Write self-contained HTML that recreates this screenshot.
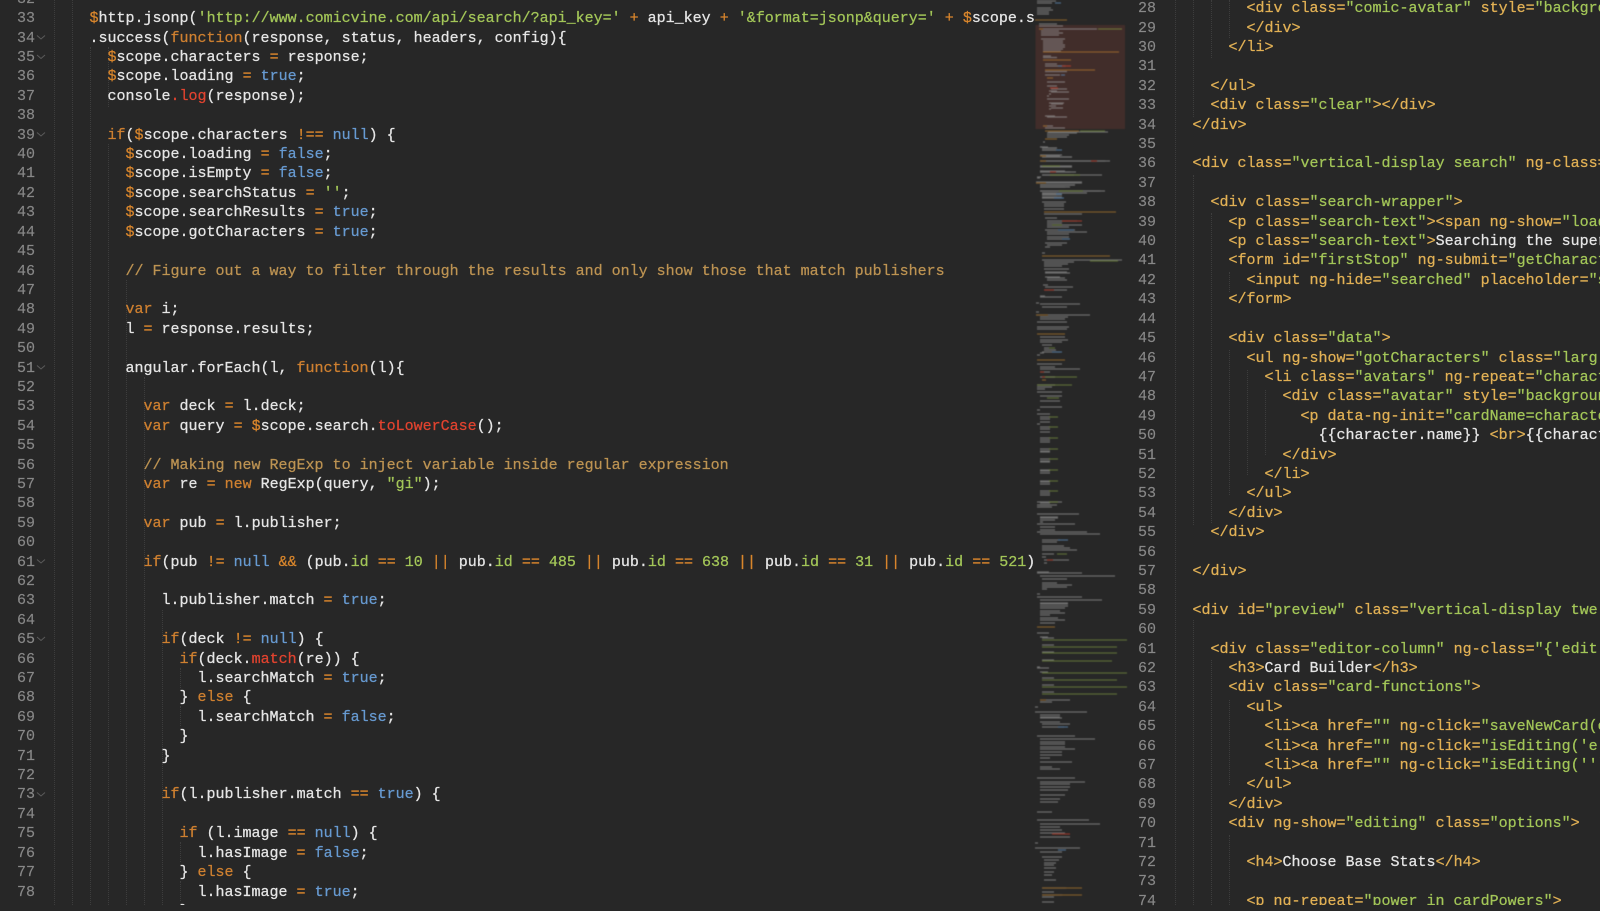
<!DOCTYPE html>
<html><head><meta charset="utf-8"><title>Editor</title>
<style>
html,body{margin:0;padding:0;background:#272727;width:1600px;height:905px;overflow:hidden}
.abs{position:absolute}
pre{margin:0;font:15px/19.4px "Liberation Mono","DejaVu Sans Mono",monospace;color:#e6e6e6;-webkit-text-stroke:.25px currentColor;white-space:pre}
.n{color:#888;text-align:right;-webkit-text-stroke:.15px #888}
.pane{position:absolute;top:0;height:905px;overflow:hidden}
i{font-style:normal}
.k{color:#cf8030}.o{color:#d9862c}.s{color:#a3c658}.b{color:#679ad1}.r{color:#e2432f}.c{color:#bd9352}
.t{color:#e2b155}
.g{position:absolute;width:0;border-left:1px dotted #3d3d3d}
</style></head><body>

<pre class="n abs" style="left:0;width:35px;top:-10.2px">32
33
34
35
36
37
38
39
40
41
42
43
44
45
46
47
48
49
50
51
52
53
54
55
56
57
58
59
60
61
62
63
64
65
66
67
68
69
70
71
72
73
74
75
76
77
78</pre>

<svg class="abs" style="left:0;top:0" width="60" height="905" fill="none" stroke="#5a5a5a" stroke-width="1"><path d="M37 35.500l4 3.500 4-3.500M37 55l4 3.500 4-3.500M37 132.500l4 3.500 4-3.500M37 365.500l4 3.500 4-3.500M37 559.500l4 3.500 4-3.500M37 637l4 3.500 4-3.500M37 792.500l4 3.500 4-3.500"/></svg>

<div class="pane" style="left:0;width:1034px">
<div class="g" style="left:54px;top:0;height:905px"></div>
<div class="g" style="left:72px;top:0;height:905px"></div>
<div class="g" style="left:90px;top:47px;height:858px"></div>
<div class="g" style="left:108px;top:47px;height:60px"></div>
<div class="g" style="left:108px;top:144px;height:761px"></div>
<div class="g" style="left:126px;top:280px;height:625px"></div>
<div class="g" style="left:144px;top:377px;height:528px"></div>
<div class="g" style="left:162px;top:610px;height:295px"></div>
<div class="g" style="left:162px;top:800px;height:105px"></div>
<div class="g" style="left:180px;top:668px;height:20px"></div>
<div class="g" style="left:180px;top:706px;height:20px"></div>
<div class="g" style="left:180px;top:842px;height:20px"></div>
<div class="g" style="left:180px;top:881px;height:20px"></div>
<pre class="abs" style="left:35.500px;top:-10.2px">

      <i class="o">$</i>http.jsonp(<i class="s">'http://www.comicvine.com/api/search/?api_key='</i> <i class="o">+</i> api_key <i class="o">+</i> <i class="s">'&amp;format=jsonp&amp;query='</i> <i class="o">+</i> <i class="o">$</i>scope.search
      .success(<i class="k">function</i>(response, status, headers, config){
        <i class="o">$</i>scope.characters <i class="o">=</i> response;
        <i class="o">$</i>scope.loading <i class="o">=</i> <i class="b">true</i>;
        console<i class="r">.log</i>(response);

        <i class="k">if</i>(<i class="o">$</i>scope.characters <i class="o">!==</i> <i class="b">null</i>) {
          <i class="o">$</i>scope.loading <i class="o">=</i> <i class="b">false</i>;
          <i class="o">$</i>scope.isEmpty <i class="o">=</i> <i class="b">false</i>;
          <i class="o">$</i>scope.searchStatus <i class="o">=</i> <i class="s">''</i>;
          <i class="o">$</i>scope.searchResults <i class="o">=</i> <i class="b">true</i>;
          <i class="o">$</i>scope.gotCharacters <i class="o">=</i> <i class="b">true</i>;

          <i class="c">// Figure out a way to filter through the results and only show those that match publishers</i>

          <i class="k">var</i> i;
          l <i class="o">=</i> response.results;

          angular.forEach(l, <i class="k">function</i>(l){

            <i class="k">var</i> deck <i class="o">=</i> l.deck;
            <i class="k">var</i> query <i class="o">=</i> <i class="o">$</i>scope.search.<i class="r">toLowerCase</i>();

            <i class="c">// Making new RegExp to inject variable inside regular expression</i>
            <i class="k">var</i> re <i class="o">=</i> <i class="k">new</i> RegExp(query, <i class="s">"gi"</i>);

            <i class="k">var</i> pub <i class="o">=</i> l.publisher;

            <i class="k">if</i>(pub <i class="o">!=</i> <i class="b">null</i> <i class="o">&amp;&amp;</i> (pub.<i class="s">id</i> <i class="o">==</i> <i class="s">10</i> <i class="o">||</i> pub.<i class="s">id</i> <i class="o">==</i> <i class="s">485</i> <i class="o">||</i> pub.<i class="s">id</i> <i class="o">==</i> <i class="s">638</i> <i class="o">||</i> pub.<i class="s">id</i> <i class="o">==</i> <i class="s">31</i> <i class="o">||</i> pub.<i class="s">id</i> <i class="o">==</i> <i class="s">521</i>)) {

              l.publisher.match <i class="o">=</i> <i class="b">true</i>;

              <i class="k">if</i>(deck <i class="o">!=</i> <i class="b">null</i>) {
                <i class="k">if</i>(deck.<i class="r">match</i>(re)) {
                  l.searchMatch <i class="o">=</i> <i class="b">true</i>;
                } <i class="k">else</i> {
                  l.searchMatch <i class="o">=</i> <i class="b">false</i>;
                }
              }

              <i class="k">if</i>(l.publisher.match <i class="o">==</i> <i class="b">true</i>) {

                <i class="k">if</i> (l.image <i class="o">==</i> <i class="b">null</i>) {
                  l.hasImage <i class="o">=</i> <i class="b">false</i>;
                } <i class="k">else</i> {
                  l.hasImage <i class="o">=</i> <i class="b">true</i>;
                }</pre>
</div>

<svg class="abs" style="left:1030px;top:0;filter:blur(.45px)" width="100" height="905" viewBox="1030 0 100 905" fill="none">
<rect x="1035.500" y="25" width="89.500" height="104" fill="#412d2a"/>
<g stroke-width="1.300" opacity=".55">
<path stroke="#a8a8a8" d="M1037 1h19M1037 3h15M1037 8h14M1037 10h16M1037 12h12M1037 14h12M1039 24h18M1039 26h24M1039 29h58M1041 31h18M1041 33h22M1041 35h18M1041 39h24M1043 41h20M1043 43h20M1043 45h22M1043 47h22M1043 49h20M1043 51h18M1043 56h8M1043 57.500h14M1045 64h12M1045 66h20M1045 71.500h22M1045 75h15M1047 82h18M1047 86h10M1051 89h16M1049 91h8M1051 92h18M1049 94h2M1047 96h2M1047 99h22M1049 103h15M1051 104h12M1049 106h7M1051 108h12M1049 109h2M1045 116h10M1047 117h20M1043 126h10M1045 128h20M1047 133h30M1047 135h22M1047 137h20M1043 142h2M1040 147h5M1042 148h15M1042 150h14M1040 156h20M1042 157h30M1040 161h65M1040 166h32M1040 171h25M1040 172h30M1042 175h60M1037 178h3M1036 183h46M1040 185h35M1040 187h30M1040 191h60M1042 193h15M1042 194h18M1042 197h15M1042 198h18"/>
<path stroke="#a8a8a8" d="M1048 132h60M1040 147h8M1042 148h15M1042 150h14M1040 155h22M1042 157h30M1040 161h70M1040 167h32M1040 171h3M1040 172h36M1042 175h32M1037 177h4M1036 182h46M1040 185h35M1040 187h25M1040 191h65M1042 193h45M1042 195h20M1042 197h20M1042 198h20M1042 202h24M1044 204h20M1044 206h20M1044 209h20M1044 214h38M1045 218h12M1047 221h30M1047 223h15M1047 225h35M1047 227h22M1045 230h30M1047 232h40M1047 234h22M1047 237h22M1047 239h22M1045 243h22M1047 245h15M1045 247h5M1042 253h3M1042 260h80M1044 262h30M1044 264h24M1044 266h18M1044 269h25M1045 272h22M1045 273h25M1045 277h15M1047 278h18M1047 280h20M1043 285h5M1045 287h28M1045 290h22M1040 296h5M1040 297h22M1036 303h3M1040 304h40M1042 307h25M1036 312h3M1036 315h54M1040 317h28M1040 319h25"/>
<path stroke="#a8a8a8" d="M1037 322h30M1037 327h32M1037 329h30M1040 337h25M1040 340h28M1040 342h22M1042 345h10M1044 348h5M1044 350h12M1042 352h18M1040 353h4M1037 355h3M1037 364h25M1040 367h15M1040 369h40M1040 372h10M1040 377h15M1037 385h18M1037 387h15M1037 389h8M1037 392h25M1040 396h22M1040 401h20M1040 407h22M1037 410h3M1037 414h13M1040 417h10M1040 419h10M1040 422h10M1037 424h3M1040 427h10M1040 429h10M1040 432h10M1040 438h10M1040 440h10M1040 442h10M1040 449h10M1040 451h10M1040 452h10M1040 459h10M1040 461h10M1040 462h10M1040 470h10M1040 471h10M1040 473h10M1040 481h10M1040 482h10M1040 484h10M1040 491h10M1040 493h10M1040 495h10M1040 502h10M1040 503h10M1040 505h10"/>
<path stroke="#a8a8a8" d="M1037 502h25M1037 505h20M1037 507h15M1037 514h42M1040 517h18M1040 518h18M1040 520h15M1040 522h3M1037 524h38M1040 527h15M1040 530h15M1037 532h50M1040 534h60M1042 540h18M1042 542h15M1042 546h22M1042 548h28M1042 550h35M1042 554h12M1042 557h4M1044 560h25M1044 563h3M1037 572h12M1037 573h45M1040 576h75M1042 579h25M1042 583h15M1042 585h30M1042 587h25M1042 589h5M1037 594h3M1037 597h45M1040 600h62M1040 603h28M1040 604h28M1040 606h28M1040 608h25M1040 611h20M1040 613h25M1040 615h10M1040 618h18M1040 620h25M1040 623h15M1037 633h12M1040 637h8M1042 638h12M1042 645h12M1042 652h12M1042 660h12M1037 667h3M1037 668h12M1040 672h8M1042 678h12M1042 685h12M1042 692h12M1040 700h30M1040 702h12M1035 707h3M1035 712h52M1040 715h20M1040 717h20M1040 718h22M1040 722h20M1042 724h28M1042 727h22M1037 736h38M1040 739h55M1040 742h25M1040 744h25M1040 747h25M1040 749h35M1040 752h22M1040 755h22M1040 758h10M1040 762h32M1040 767h12M1040 769h20M1037 778h38M1040 782h45M1040 784h30M1040 787h30M1040 790h28M1040 795h25M1040 799h20M1040 802h18M1037 812h15M1037 820h52M1040 824h60M1040 827h20M1040 830h22M1040 833h25M1040 837h30M1035 843h3M1035 848h45M1040 852h22M1042 857h20M1044 860h15M1044 863h12M1044 865h10M1044 868h12M1044 872h10M1044 875h8M1044 880h12M1042 888h24M1042 892h12M1042 895h20M1042 897h12M1042 902h12"/>
<path stroke="#c4842f" d="M1035 20h32M1039 29h4M1043 52h76M1043 60h28M1045 70h50M1047 78h6M1045 131h34M1043 126h4M1045 139h12M1040 156h6M1036 183h10M1040 161h6M1044 212h72M1036 315h12M1037 334h28M1037 360h28M1042 380h4M1042 256h68M1037 627h18M1040 700h6M1042 888h40M1042 895h40"/>
<path stroke="#9fc04f" opacity=".8" d="M1098 29h24M1080 131h25M1042 166h18M1050 175h30M1059 191h24M1090 261h28M1052 225h10M1049 348h6M1042 377h35M1037 385h35M1047 398h12M1049 417h9M1049 427h9M1049 438h9M1049 449h9M1049 459h9M1049 470h9M1049 481h9M1049 491h9M1049 502h9M1057 554h10M1042 640h85M1042 647h75M1042 653h75M1042 661h70M1042 673h85M1042 680h75M1042 687h85M1042 694h75"/>
<path stroke="#6a9fd6" d="M1055 3h6M1058 66h8M1061 75h4M1056 150h6M1056 194h6M1054 198h10M1052 352h10M1058 230h16M1062 239h8M1058 727h10M1058 540h10M1058 850h8"/>
<path stroke="#e2432f" d="M1062 66h9M1050 88h8M1091 161h6M1050 172h6M1062 221h20M1044 290h10M1040 372h4M1042 377h3M1052 834h18M1047 560h6"/>
</g>
</svg>

<pre class="n abs" style="left:1120px;width:36px;top:-.8px">28
29
30
31
32
33
34
35
36
37
38
39
40
41
42
43
44
45
46
47
48
49
50
51
52
53
54
55
56
57
58
59
60
61
62
63
64
65
66
67
68
69
70
71
72
73
74</pre>

<div class="pane" style="left:1157px;width:443px">
<div class="g" style="left:18px;top:0;height:905px"></div>
<div class="g" style="left:36px;top:0;height:117px"></div>
<div class="g" style="left:36px;top:175px;height:350px"></div>
<div class="g" style="left:36px;top:620px;height:285px"></div>
<div class="g" style="left:54px;top:0;height:58px"></div>
<div class="g" style="left:54px;top:213px;height:310px"></div>
<div class="g" style="left:54px;top:660px;height:245px"></div>
<div class="g" style="left:72px;top:0;height:38px"></div>
<div class="g" style="left:72px;top:272px;height:20px"></div>
<div class="g" style="left:72px;top:350px;height:145px"></div>
<div class="g" style="left:72px;top:700px;height:85px"></div>
<div class="g" style="left:72px;top:835px;height:70px"></div>
<div class="g" style="left:90px;top:370px;height:105px"></div>
<div class="g" style="left:108px;top:390px;height:65px"></div>
<pre class="abs" style="left:-.500px;top:-.8px">          <i class="t">&lt;div class=</i><i class="s">"comic-avatar"</i> <i class="t">style=</i><i class="s">"backgro</i>
          <i class="t">&lt;/div&gt;</i>
        <i class="t">&lt;/li&gt;</i>

      <i class="t">&lt;/ul&gt;</i>
      <i class="t">&lt;div class=</i><i class="s">"clear"</i><i class="t">&gt;&lt;/div&gt;</i>
    <i class="t">&lt;/div&gt;</i>

    <i class="t">&lt;div class=</i><i class="s">"vertical-display search"</i> <i class="t">ng-class=</i>

      <i class="t">&lt;div class=</i><i class="s">"search-wrapper"</i><i class="t">&gt;</i>
        <i class="t">&lt;p class=</i><i class="s">"search-text"</i><i class="t">&gt;&lt;span ng-show=</i><i class="s">"load</i>
        <i class="t">&lt;p class=</i><i class="s">"search-text"</i><i class="t">&gt;</i>Searching the super
        <i class="t">&lt;form id=</i><i class="s">"firstStop"</i> <i class="t">ng-submit=</i><i class="s">"getCharact</i>
          <i class="t">&lt;input ng-hide=</i><i class="s">"searched"</i> <i class="t">placeholder=</i><i class="s">"s</i>
        <i class="t">&lt;/form&gt;</i>

        <i class="t">&lt;div class=</i><i class="s">"data"</i><i class="t">&gt;</i>
          <i class="t">&lt;ul ng-show=</i><i class="s">"gotCharacters"</i> <i class="t">class=</i><i class="s">"larg</i>
            <i class="t">&lt;li class=</i><i class="s">"avatars"</i> <i class="t">ng-repeat=</i><i class="s">"charact</i>
              <i class="t">&lt;div class=</i><i class="s">"avatar"</i> <i class="t">style=</i><i class="s">"backgroun</i>
                <i class="t">&lt;p data-ng-init=</i><i class="s">"cardName=characte</i>
                  {{character.name}} <i class="t">&lt;br&gt;</i>{{charact
              <i class="t">&lt;/div&gt;</i>
            <i class="t">&lt;/li&gt;</i>
          <i class="t">&lt;/ul&gt;</i>
        <i class="t">&lt;/div&gt;</i>
      <i class="t">&lt;/div&gt;</i>

    <i class="t">&lt;/div&gt;</i>

    <i class="t">&lt;div id=</i><i class="s">"preview"</i> <i class="t">class=</i><i class="s">"vertical-display twe</i>

      <i class="t">&lt;div class=</i><i class="s">"editor-column"</i> <i class="t">ng-class=</i><i class="s">"{'edit</i>
        <i class="t">&lt;h3&gt;</i>Card Builder<i class="t">&lt;/h3&gt;</i>
        <i class="t">&lt;div class=</i><i class="s">"card-functions"</i><i class="t">&gt;</i>
          <i class="t">&lt;ul&gt;</i>
            <i class="t">&lt;li&gt;&lt;a href=</i><i class="s">""</i> <i class="t">ng-click=</i><i class="s">"saveNewCard(c</i>
            <i class="t">&lt;li&gt;&lt;a href=</i><i class="s">""</i> <i class="t">ng-click=</i><i class="s">"isEditing('e</i>
            <i class="t">&lt;li&gt;&lt;a href=</i><i class="s">""</i> <i class="t">ng-click=</i><i class="s">"isEditing('')</i>
          <i class="t">&lt;/ul&gt;</i>
        <i class="t">&lt;/div&gt;</i>
        <i class="t">&lt;div ng-show=</i><i class="s">"editing"</i> <i class="t">class=</i><i class="s">"options"</i><i class="t">&gt;</i>

          <i class="t">&lt;h4&gt;</i>Choose Base Stats<i class="t">&lt;/h4&gt;</i>

          <i class="t">&lt;p ng-repeat=</i><i class="s">"power in cardPowers"</i><i class="t">&gt;</i></pre>
</div>
</body></html>
